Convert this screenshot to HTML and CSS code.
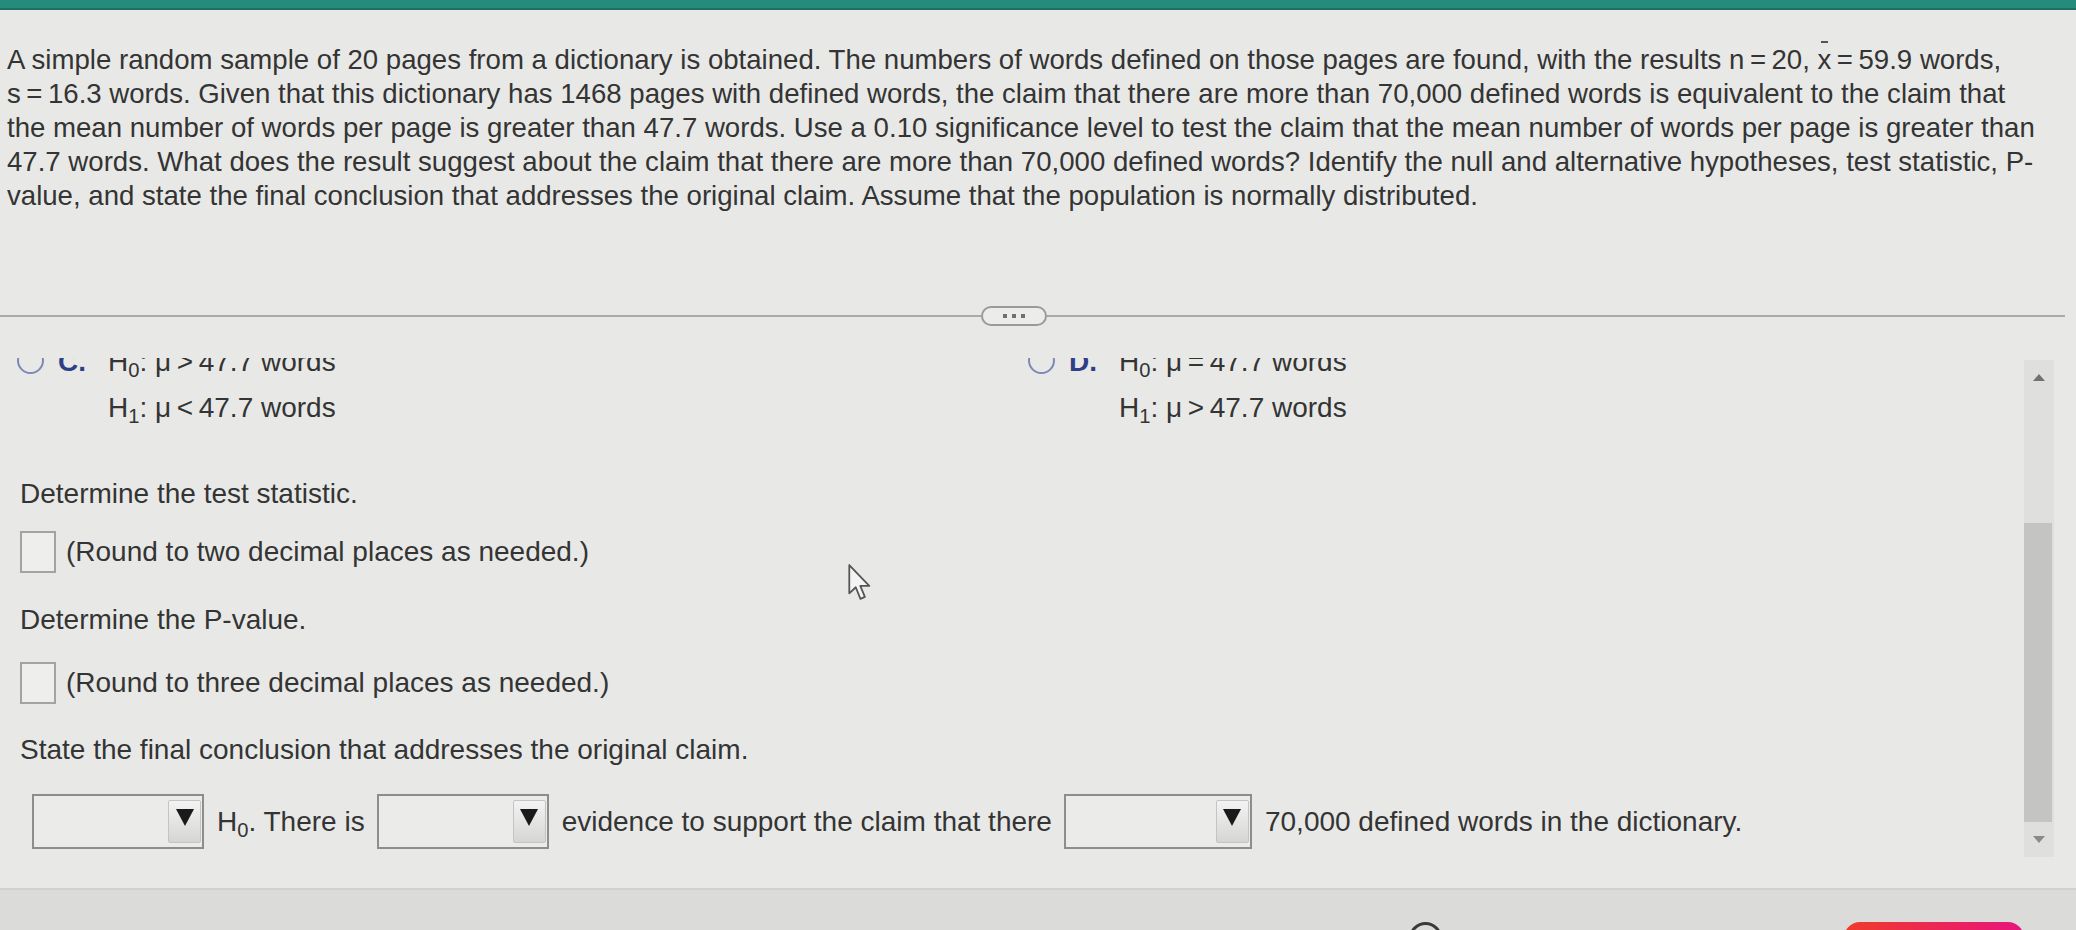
FILE: index.html
```html
<!DOCTYPE html>
<html lang="en">
<head>
<meta charset="utf-8">
<title>Hypothesis test question</title>
<link rel="stylesheet" href="styles.css">
</head>
<body>
<div class="topbar"></div>
<main class="page">
  <p class="problem">A simple random sample of 20 pages from a dictionary is obtained. The numbers of words defined on those pages are found, with the results n&#8201;=&#8201;20, <span class="xbar">x</span>&#8201;=&#8201;59.9 words,<br>s&#8201;=&#8201;16.3 words. Given that this dictionary has 1468 pages with defined words, the claim that there are more than 70,000 defined words is equivalent to the claim that<br>the mean number of words per page is greater than 47.7 words. Use a 0.10 significance level to test the claim that the mean number of words per page is greater than<br>47.7 words. What does the result suggest about the claim that there are more than 70,000 defined words? Identify the null and alternative hypotheses, test statistic, P-<br>value, and state the final conclusion that addresses the original claim. Assume that the population is normally distributed.</p>

  <div class="divider">
    <span class="rule"></span>
    <span class="more"><i></i><i></i><i></i></span>
    <span class="rule rule-right"></span>
  </div>

  <section class="workarea">
    <div class="scroll-content">
      <div class="options">
        <div class="option">
          <span class="radio"></span>
          <span class="letter">C.</span>
          <div class="hyps">
            <div>H<sub>0</sub>: μ&#8201;&gt;&#8201;47.7 words</div>
            <div>H<sub>1</sub>: μ&#8201;&lt;&#8201;47.7 words</div>
          </div>
        </div>
        <div class="option">
          <span class="radio"></span>
          <span class="letter">D.</span>
          <div class="hyps">
            <div>H<sub>0</sub>: μ&#8201;=&#8201;47.7 words</div>
            <div>H<sub>1</sub>: μ&#8201;&gt;&#8201;47.7 words</div>
          </div>
        </div>
      </div>

      <div class="questions">
        <div class="heading">Determine the test statistic.</div>
        <div class="answer"><span class="box"></span><span>(Round to two decimal places as needed.)</span></div>
        <div class="heading h-pvalue">Determine the P-value.</div>
        <div class="answer answer-2"><span class="box"></span><span>(Round to three decimal places as needed.)</span></div>
        <div class="heading h-state">State the final conclusion that addresses the original claim.</div>
        <div class="conclusion">
          <span class="select"><span class="select-btn"><span class="tri"></span></span></span>
          <span class="txt">H<sub>0</sub>. There is</span>
          <span class="select"><span class="select-btn"><span class="tri"></span></span></span>
          <span class="txt">evidence to support the claim that there</span>
          <span class="select select-wide"><span class="select-btn"><span class="tri"></span></span></span>
          <span class="txt">70,000 defined words in the dictionary.</span>
        </div>
      </div>
    </div>

    <div class="scrollbar">
      <div class="sb-end"><span class="arrow-up"></span></div>
      <div class="sb-track"></div>
      <div class="sb-thumb"></div>
      <div class="sb-end sb-end-down"><span class="arrow-down"></span></div>
    </div>
  </section>

  <footer class="footer">
    <span class="help-circle"></span>
    <span class="red-btn"></span>
  </footer>
</main>

<svg class="cursor" width="28" height="40" viewBox="0 0 20 29" aria-hidden="true">
  <path d="M1.5 1.5 L1.5 22 L6.2 17.6 L9.6 26 L12.8 24.6 L9.5 16.6 L16 16.6 Z" fill="#f4f4f4" stroke="#555" stroke-width="1.3" stroke-linejoin="round"/>
</svg>
</body>
</html>
```

FILE: styles.css
```css
* { box-sizing: border-box; }

html, body {
  margin: 0;
  padding: 0;
  width: 2076px;
  height: 930px;
  overflow: hidden;
}

body {
  background: #e8e9e7;
  color: #343434;
  font-family: "Liberation Sans", Arial, sans-serif;
  font-size: 28px;
  position: relative;
}

.topbar {
  height: 10px;
  background: #268b7a;
  border-bottom: 2px solid #1d6f62;
}

.page {
  display: flex;
  flex-direction: column;
  height: 920px;
}

.problem {
  margin: 33px 0 0 7px;
  font-size: 27.6px;
  line-height: 34px;
  white-space: nowrap;
}

.xbar {
  position: relative;
}
.xbar::before {
  content: "";
  position: absolute;
  left: 3px;
  right: 3px;
  top: -3px;
  height: 2px;
  background: #555;
}

sub {
  font-size: 0.72em;
  vertical-align: -0.28em;
  line-height: 0;
}

/* divider with "more" pill */
.divider {
  display: flex;
  align-items: center;
  height: 20px;
  margin-top: 93px;
}
.rule {
  height: 2px;
  background: #a9aaa8;
  width: 981px;
}
.rule-right {
  flex: 1;
  width: auto;
  margin-right: 11px;
}
.more {
  width: 66px;
  height: 20px;
  border: 2px solid #9a9b99;
  border-radius: 11px;
  background: #ecedeb;
  display: flex;
  align-items: center;
  justify-content: center;
  gap: 5px;
}
.more i {
  width: 4px;
  height: 4px;
  background: #707070;
}

/* work area */
.workarea {
  display: flex;
  height: 530px;
  margin-top: 32px;
  overflow: hidden;
}
.scroll-content {
  flex: 1;
  overflow: hidden;
}

.options {
  display: grid;
  grid-template-columns: 1011px 1fr;
  padding-left: 17px;
  margin-top: -19px;
}
.option {
  display: flex;
  align-items: flex-start;
}
.radio {
  width: 27px;
  height: 27px;
  border: 2px solid #7f87b4;
  border-radius: 50%;
  margin-top: 8px;
  flex: none;
}
.letter {
  width: 50px;
  margin-left: 14px;
  line-height: 46px;
  font-weight: bold;
  color: #2f3f86;
  flex: none;
}
.hyps {
  line-height: 46px;
}

.questions {
  padding-left: 20px;
  margin-top: 46px;
}
.heading {
  line-height: 34px;
}
.h-pvalue { margin-top: 30px; }
.h-state { margin-top: 29px; }

.answer {
  display: flex;
  align-items: center;
  gap: 10px;
  margin-top: 20px;
  line-height: 42px;
}
.answer-2 { margin-top: 25px; }
.box {
  width: 36px;
  height: 42px;
  border: 2px solid #a3a4a2;
  background: #eeefed;
}

.conclusion {
  display: flex;
  align-items: center;
  margin-top: 27px;
  margin-left: 12px;
}
.select {
  width: 172px;
  height: 55px;
  border: 2px solid #8d8e8c;
  background: #ebecea;
  display: flex;
  justify-content: flex-end;
  align-items: center;
  padding-right: 1px;
  flex: none;
}
.select-wide { width: 188px; }
.select-btn {
  width: 33px;
  height: 43px;
  border: 1px solid #c4c5c3;
  border-radius: 2px;
  background: linear-gradient(#f3f3f3, #d5d6d4);
  display: flex;
  justify-content: center;
  padding-top: 8px;
}
.tri {
  width: 0;
  height: 0;
  border-left: 9px solid transparent;
  border-right: 9px solid transparent;
  border-top: 17px solid #1a1a1a;
}
.txt {
  margin: 0 12px 0 13px;
  white-space: nowrap;
}

/* scrollbar */
.scrollbar {
  width: 30px;
  margin: 2px 22px 31px 0;
  display: flex;
  flex-direction: column;
  background: #dfe0de;
}
.sb-end {
  height: 34px;
  display: flex;
  justify-content: center;
  align-items: center;
}
.sb-end-down { height: 35px; }
.sb-track {
  flex: 1;
}
.sb-thumb {
  height: 299px;
  background: #c4c5c3;
  margin: 0 2px 0 0;
}
.arrow-up {
  width: 0;
  height: 0;
  border-left: 6px solid transparent;
  border-right: 6px solid transparent;
  border-bottom: 7px solid #727272;
}
.arrow-down {
  width: 0;
  height: 0;
  border-left: 6px solid transparent;
  border-right: 6px solid transparent;
  border-top: 7px solid #8a8a8a;
}

/* footer */
.footer {
  flex: 1;
  display: flex;
  align-items: flex-start;
  background: #dbdcda;
  border-top: 2px solid #d0d1cf;
  overflow: hidden;
  padding-top: 32px;
}
.help-circle {
  width: 33px;
  height: 33px;
  margin-left: 1409px;
  border: 3px solid #3a3a3a;
  border-radius: 50%;
  flex: none;
}
.red-btn {
  width: 180px;
  height: 40px;
  margin-left: auto;
  margin-right: 52px;
  border-radius: 16px;
  background: linear-gradient(90deg, #ef3b2b, #e8147c);
  flex: none;
}

.cursor {
  position: absolute;
  left: 847px;
  top: 563px;
}
```
